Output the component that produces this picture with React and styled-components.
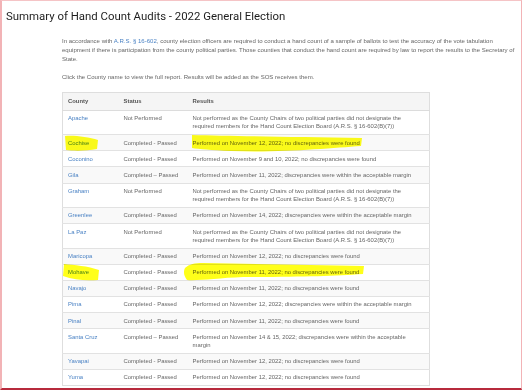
import React from 'react';
import styled, { createGlobalStyle } from 'styled-components';

const rows = [
  {
    county: 'Apache',
    status: 'Not Performed',
    result:
      'Not performed as the County Chairs of two political parties did not designate the required members for the Hand Count Election Board (A.R.S. § 16-602(B)(7))',
  },
  {
    county: 'Cochise',
    status: 'Completed - Passed',
    result: 'Performed on November 12, 2022; no discrepancies were found',
    mark: 'cochise',
  },
  {
    county: 'Coconino',
    status: 'Completed - Passed',
    result: 'Performed on November 9 and 10, 2022; no discrepancies were found',
  },
  {
    county: 'Gila',
    status: 'Completed – Passed',
    result: 'Performed on November 11, 2022; discrepancies were within the acceptable margin',
  },
  {
    county: 'Graham',
    status: 'Not Performed',
    result:
      'Not performed as the County Chairs of two political parties did not designate the required members for the Hand Count Election Board (A.R.S. § 16-602(B)(7))',
  },
  {
    county: 'Greenlee',
    status: 'Completed - Passed',
    result: 'Performed on November 14, 2022; discrepancies were within the acceptable margin',
  },
  {
    county: 'La Paz',
    status: 'Not Performed',
    result:
      'Not performed as the County Chairs of two political parties did not designate the required members for the Hand Count Election Board (A.R.S. § 16-602(B)(7))',
  },
  {
    county: 'Maricopa',
    status: 'Completed - Passed',
    result: 'Performed on November 12, 2022; no discrepancies were found',
  },
  {
    county: 'Mohave',
    status: 'Completed - Passed',
    result: 'Performed on November 11, 2022; no discrepancies were found',
    mark: 'mohave',
  },
  {
    county: 'Navajo',
    status: 'Completed - Passed',
    result: 'Performed on November 11, 2022; no discrepancies were found',
  },
  {
    county: 'Pima',
    status: 'Completed - Passed',
    result: 'Performed on November 12, 2022; discrepancies were within the acceptable margin',
  },
  {
    county: 'Pinal',
    status: 'Completed - Passed',
    result: 'Performed on November 11, 2022; no discrepancies were found',
  },
  {
    county: 'Santa Cruz',
    status: 'Completed – Passed',
    result: 'Performed on November 14 & 15, 2022; discrepancies were within the acceptable margin',
  },
  {
    county: 'Yavapai',
    status: 'Completed - Passed',
    result: 'Performed on November 12, 2022; no discrepancies were found',
  },
  {
    county: 'Yuma',
    status: 'Completed - Passed',
    result: 'Performed on November 12, 2022; no discrepancies were found',
  },
];

// hand-drawn marker strokes, in px relative to the marked text
const strokes = {
  cochise: {
    name: { left: -4, top: -5, w: 35, h: 18, d: 'M1 2 C10 1 24 3 34 6 L33 15 C22 17 10 17 2 16 Z' },
    result: {
      left: -2,
      top: -5,
      w: 172,
      h: 20,
      d: 'M1 1 C40 2 100 3 171 4 L170 12 C140 14 90 19 40 17 C20 16 8 15 1 14 Z',
    },
  },
  mohave: {
    name: { left: -6, top: -5, w: 38, h: 19, d: 'M2 1 C12 2 26 3 37 7 L36 17 C24 18 12 17 1 13 Z' },
    result: {
      left: -10,
      top: -5,
      w: 182,
      h: 19,
      d: 'M2 5 C6 1 12 0 20 0 C80 1 130 2 181 3 L180 11 C150 13 120 14 60 14 C35 15 15 18 4 17 C1 13 0 9 2 5 Z',
    },
  },
};

function Marked({ stroke, children }) {
  if (!stroke) return children;
  return (
    <MarkWrap>
      {children}
      <MarkSvg
        width={stroke.w}
        height={stroke.h}
        style={{ left: stroke.left, top: stroke.top }}
        viewBox={`0 0 ${stroke.w} ${stroke.h}`}
      >
        <path d={stroke.d} fill='#ffff1a' />
      </MarkSvg>
    </MarkWrap>
  );
}

export default function App() {
  return (
    <>
      <GlobalStyle />
      <Frame>
        <Title>Summary of Hand Count Audits - 2022 General Election</Title>
        <Content>
          <Intro>
            In accordance with <Link>A.R.S. § 16-602</Link>, county election officers are required
            to conduct a hand count of a sample of ballots to test the accuracy of the vote
            tabulation equipment if there is participation from the county political parties.
            Those counties that conduct the hand count are required by law to report the results
            to the Secretary of State.
          </Intro>
          <Intro>
            Click the County name to view the full report. Results will be added as the SOS
            receives them.
          </Intro>
          <AuditTable>
            <colgroup>
              <col style={{ width: 56 }} />
              <col style={{ width: 69 }} />
              <col />
            </colgroup>
            <thead>
              <tr>
                <Th>County</Th>
                <Th>Status</Th>
                <Th>Results</Th>
              </tr>
            </thead>
            <tbody>
              {rows.map((r) => {
                const s = r.mark ? strokes[r.mark] : null;
                return (
                  <Row key={r.county}>
                    <Td>
                      <Marked stroke={s && s.name}>
                        <Link>{r.county}</Link>
                      </Marked>
                    </Td>
                    <Td>{r.status}</Td>
                    <Td>
                      <Marked stroke={s && s.result}>{r.result}</Marked>
                    </Td>
                  </Row>
                );
              })}
            </tbody>
          </AuditTable>
        </Content>
      </Frame>
    </>
  );
}

const GlobalStyle = createGlobalStyle`
  html, body {
    margin: 0;
    background: #fff;
  }
`;

const Frame = styled.div`
  box-sizing: border-box;
  width: 522px;
  height: 390px;
  overflow: hidden;
  background: #fff;
  border-top: 1px solid #f5c4c6;
  border-left: 2px solid #f2b3b6;
  border-right: 1px solid #f2b3b6;
  border-bottom: 2px solid #b72a3c;
  font-family: 'Liberation Sans', Arial, sans-serif;
`;

const Title = styled.h1`
  margin: 0;
  padding: 7px 0 0 4px;
  font-family: Roboto, 'Open Sans', sans-serif;
  font-weight: 400;
  font-size: 11.4px;
  line-height: 16px;
  color: #1e1e1e;
`;

const Content = styled.div`
  width: 456px;
  margin: 13px 0 0 60px;
`;

const Intro = styled.p`
  margin: 0 0 10px;
  font-size: 6.05px;
  line-height: 8.8px;
  color: #666;
`;

const Link = styled.a`
  color: #4a82c4;
  text-decoration: none;
  cursor: pointer;
`;

const AuditTable = styled.table`
  width: 368px;
  margin-top: 0;
  border-collapse: collapse;
  table-layout: fixed;
  border: 1px solid #dedede;
  font-size: 5.9px;
  line-height: 8.5px;
  color: #666;
`;

const Th = styled.th`
  padding: 4px 5px;
  text-align: left;
  font-weight: 700;
  color: #555;
  background: #f5f5f5;
  border-bottom: 1px solid #dcdcdc;
`;

const Row = styled.tr`
  &:nth-child(even) {
    background: #f9f9f9;
  }
`;

const Td = styled.td`
  padding: 3.3px 5px;
  vertical-align: top;
  border-top: 1px solid #e2e2e2;
`;

const MarkWrap = styled.span`
  position: relative;
  display: inline-block;
`;

const MarkSvg = styled.svg`
  position: absolute;
  mix-blend-mode: multiply;
  pointer-events: none;
`;
